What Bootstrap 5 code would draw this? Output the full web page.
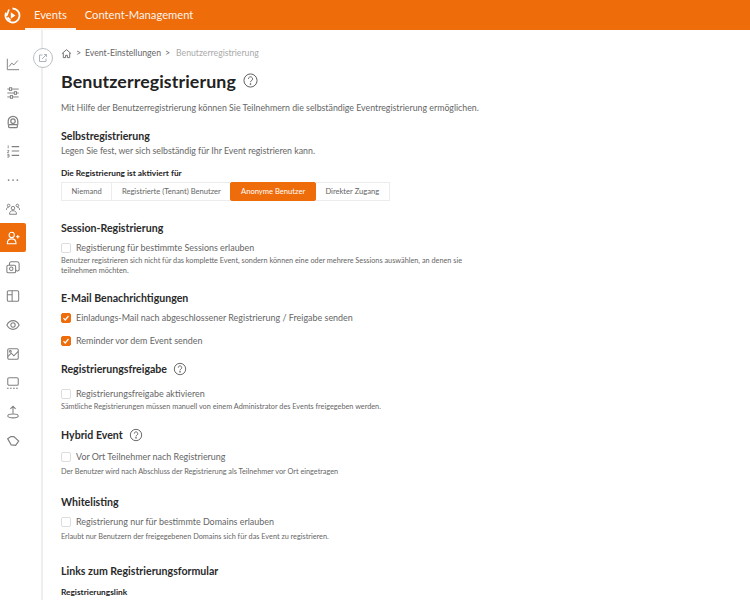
<!DOCTYPE html>
<html lang="de">
<head>
    <meta charset="UTF-8">
    <meta name="viewport" content="width=device-width, initial-scale=1.0">
    <title>Benutzerregistrierung</title>
    <link href="https://cdn.jsdelivr.net/npm/bootstrap@5.3.0/dist/css/bootstrap.min.css" rel="stylesheet">
    <style>
        html, body { height: 600px; overflow: hidden; }
        body { font-family: "Lato", "Liberation Sans", sans-serif; color: #666; background: #fff; font-size: 9px; }
        .top-bar { height: 30px; background: #ee6c0a; }
        .top-logo { width: 25px; }
        .top-link { color: #fff; font-size: 11.2px; line-height: 30px; height: 30px; padding: 0 9px; text-decoration: none; opacity: .92; }
        .top-link.on { border-bottom: 2px solid #fff; }
        .shell { height: 570px; }
        .side-rail { width: 43px; flex: none; border-right: 2px solid #eeeeee; padding-top: 19px; position: relative; }
        .rail-item { width: 26px; height: 29px; display: flex; align-items: center; justify-content: center; color: #808080; }
        .rail-item svg { width: 14px; height: 14px; }
        .rail-item.on { background: #ee6c0a; color: #fff; border-radius: 0 2px 2px 0; }
        .share-btn { position: absolute; left: 33px; top: 18px; width: 20px; height: 20px; border-radius: 50%; background: #fff; border: 1px solid #b9c0c4; display: flex; align-items: center; justify-content: center; color: #a5adb2; }
        .page-main { padding: 17px 0 0 18px; width: 480px; flex: none; }
        .crumbs { height: 12px; font-size: 8.7px; color: #666; gap: 4px; }
        .crumbs .last { color: #aaa; margin-left: 2px; }
        .page-title { font-size: 17.8px; font-weight: 700; color: #222; margin: 10px 0 0; line-height: 24px; letter-spacing: .1px; }
        .help-ic { width: 14px; height: 14px; color: #555; flex: none; }
        .title-help { width: 15px; height: 15px; margin-top: 9px; }
        .head-row { gap: 6px; }
        .title-row { gap: 7px; }
        .intro { margin: 9px 0 0; line-height: 12px; font-size: 8.8px; white-space: nowrap; }
        .sect-h { font-size: 10.6px; font-weight: 700; color: #2a2a2a; line-height: 14px; margin: 0; }
        .plain-line { font-size: 8.8px; line-height: 12px; margin: 2px 0 0; }
        .field-h { font-size: 8.3px; font-weight: 700; color: #222; line-height: 11px; margin: 11px 0 0; }
        .field-h.link-label { margin-top: 9px; }
        .seg-group { margin-top: 3px; height: 19px; }
        .seg-btn { font-size: 7.6px; padding: 0 9.6px; border: 1px solid #ececec; background: #fff; color: #666; border-radius: 0; line-height: 17px; }
        .seg-btn + .seg-btn { margin-left: -1px; }
        .seg-btn.on { background: #ee6c0a; border-color: #ee6c0a; color: #fff; border-radius: 2px; position: relative; }
        .check-row { margin: 7px 0 0; gap: 5px; font-size: 8.95px; line-height: 12px; color: #666; }
        .check-row.wide-top { margin-top: 11px; }
        .check-row.help-top { margin-top: 12px; }
        .check-row.hybrid-top { margin-top: 9px; }
        .check-box { width: 10px; height: 10px; flex: none; border: 1px solid #ddd; border-radius: 2px; display: flex; align-items: center; justify-content: center; background: #fff; }
        .check-box.on { background: #ee6c0a; border-color: #ee6c0a; color: #fff; }
        .fine-print { font-size: 7.3px; line-height: 10px; margin: 2px 0 0; color: #666; max-width: 405px; }
        .fine-print.fine-gap { margin-top: 4px; }
        .sec-15 { margin-top: 15px; }
        .sec-16 { margin-top: 16px; }
        .sec-18 { margin-top: 18px; }
        .sec-20 { margin-top: 20px; }
        .sec-22 { margin-top: 22px; }
    </style>
</head>
<body>
    <div class="top-bar d-flex align-items-stretch">
        <div class="top-logo d-flex align-items-center justify-content-center">
            <svg width="17" height="17" viewBox="0 0 17 17" fill="none" stroke="#fff" stroke-width="1.8">
                <path d="M8.5 1.5a7 7 0 1 1-6.4 4.1"/>
                <path d="M5 2.5 2.5 9M6.5 13.5l-3-3"/>
                <path d="M6.8 5.2l4.6 3.3-4.6 3.3z" fill="#fff" stroke="none"/>
            </svg>
        </div>
        <a class="top-link on" href="#">Events</a>
        <a class="top-link" href="#">Content-Management</a>
    </div>
    <div class="shell d-flex">
        <div class="side-rail">
            <div class="rail-item"><svg viewBox="0 0 16 16" fill="none" stroke="currentColor" stroke-width="1.1"><path d="M1.500 2v12.500H15"/><path d="M3.500 11l3-4 2.500 2 4.500-5"/></svg></div>
            <div class="rail-item"><svg viewBox="0 0 16 16" fill="none" stroke="currentColor" stroke-width="1.1"><path d="M1.500 3.500h13M1.500 8h13M1.500 12.500h13"/><rect x="4" y="2" width="2.500" height="3" fill="#fff"/><rect x="9.500" y="6.500" width="2.500" height="3" fill="#fff"/><rect x="5" y="11" width="2.500" height="3" fill="#fff"/></svg></div>
            <div class="rail-item"><svg viewBox="0 0 16 16" fill="none" stroke="currentColor" stroke-width="1.400"><path d="M2.500 11V7a5.500 5.500 0 0 1 11 0v4"/><circle cx="8" cy="7" r="2.500"/><rect x="3" y="11" width="10" height="3.500" rx="1"/></svg></div>
            <div class="rail-item"><svg viewBox="0 0 16 16" fill="none" stroke="currentColor" stroke-width="1.200"><path d="M6.500 3h8.500M6.500 8h8.500M6.500 13h8.500"/><path d="M2.500 1.500V5M1.500 7.500h2l-2 2.500h2M1.500 12h2v3h-2M1.500 13.500h2" stroke-width=".9"/></svg></div>
            <div class="rail-item"><svg viewBox="0 0 16 16" fill="currentColor"><circle cx="3" cy="8" r="1"/><circle cx="8" cy="8" r="1"/><circle cx="13" cy="8" r="1"/></svg></div>
            <div class="rail-item"><svg viewBox="0 0 16 16" fill="none" stroke="currentColor" stroke-width="1.100"><circle cx="8" cy="7" r="2"/><path d="M4 14c0-3 1.500-4 4-4s4 1 4 4z"/><circle cx="3" cy="4" r="1.500"/><circle cx="13" cy="4" r="1.500"/><path d="M.5 9c0-2 1-3 2.500-3M15.500 9c0-2-1-3-2.500-3"/></svg></div>
            <div class="rail-item on"><svg viewBox="0 0 16 16" fill="none" stroke="currentColor" stroke-width="1.200"><circle cx="6.500" cy="4.500" r="3"/><path d="M1.500 14.500c0-4 2-5.500 5-5.500s5 1.500 5 5.500z"/><path d="M11.500 6.500h4M13.500 4.500v4"/></svg></div>
            <div class="rail-item"><svg viewBox="0 0 16 16" fill="none" stroke="currentColor" stroke-width="1.200"><rect x="1" y="6" width="10" height="8.500" rx="1.500"/><circle cx="6" cy="10" r="2"/><path d="M4 6V3.500A2 2 0 0 1 6 2h6a2.500 2.500 0 0 1 3 2.500V10a2 2 0 0 1-4 1"/></svg></div>
            <div class="rail-item"><svg viewBox="0 0 16 16" fill="none" stroke="currentColor" stroke-width="1.200"><rect x="1.500" y="2" width="13" height="12" rx="1.500"/><path d="M7 2v12M1.500 6.500H7"/></svg></div>
            <div class="rail-item"><svg viewBox="0 0 16 16" fill="none" stroke="currentColor" stroke-width="1.200"><path d="M1 8s2.500-5 7-5 7 5 7 5-2.500 5-7 5-7-5-7-5z"/><circle cx="8" cy="8" r="2.500"/></svg></div>
            <div class="rail-item"><svg viewBox="0 0 16 16" fill="none" stroke="currentColor" stroke-width="1.200"><rect x="2" y="2" width="12" height="12" rx="1.500"/><path d="M2 11l4-4 3 3 5-5"/><circle cx="5" cy="5" r="1"/></svg></div>
            <div class="rail-item"><svg viewBox="0 0 16 16" fill="none" stroke="currentColor" stroke-width="1.200"><rect x="2" y="2" width="12" height="8.500" rx="1.500"/><path d="M1 14h14" stroke-dasharray="2 1.500"/></svg></div>
            <div class="rail-item"><svg viewBox="0 0 16 16" fill="none" stroke="currentColor" stroke-width="1.200"><path d="M8 10V2M5 4.500 8 1.500l3 3"/><ellipse cx="8" cy="12.500" rx="6" ry="2.200"/></svg></div>
            <div class="rail-item"><svg viewBox="0 0 16 16" fill="none" stroke="currentColor" stroke-width="1.400"><path d="M2 5.500 5.500 3h3.500l5.500 5-3.500 5L6 12.500z"/></svg></div>
            <div class="share-btn"><svg width="10" height="10" viewBox="0 0 10 10" fill="none" stroke="currentColor" stroke-width=".9"><path d="M4.500 2H1.500v6.500H8V5.500M4 6l4.500-4.500M6 1.500h2.500V4"/></svg></div>
        </div>
        <div class="page-main">
            <div class="crumbs d-flex align-items-center">
                <svg width="11" height="11" viewBox="0 0 12 12" fill="none" stroke="#666" stroke-width="1"><path d="M1 6.200 6 1.800l5 4.400M2.500 5.500v5h2.500V8h2v2.500h2.500v-5"/></svg>
                <span>&gt;</span><span>Event-Einstellungen</span><span>&gt;</span><span class="last">Benutzerregistrierung</span>
            </div>
            <div class="d-flex align-items-center title-row">
                <h1 class="page-title">Benutzerregistrierung</h1>
                <svg class="help-ic title-help" viewBox="0 0 16 16" fill="none" stroke="currentColor" stroke-width="1"><circle cx="8" cy="8" r="7"/><path d="M5.800 6.200a2.200 2.200 0 1 1 3.400 1.900c-.8.500-1.200.9-1.200 1.700"/><circle cx="8" cy="11.800" r=".5"/></svg>
            </div>
            <p class="intro">Mit Hilfe der Benutzerregistrierung können Sie Teilnehmern die selbständige Eventregistrierung ermöglichen.</p>

            <div class="sec-15">
                <h2 class="sect-h">Selbstregistrierung</h2>
                <p class="plain-line">Legen Sie fest, wer sich selbständig für Ihr Event registrieren kann.</p>
                <p class="field-h">Die Registrierung ist aktiviert für</p>
                <div class="seg-group d-flex">
                    <button class="seg-btn">Niemand</button>
                    <button class="seg-btn">Registrierte (Tenant) Benutzer</button>
                    <button class="seg-btn on">Anonyme Benutzer</button>
                    <button class="seg-btn">Direkter Zugang</button>
                </div>
            </div>

            <div class="sec-20">
                <h2 class="sect-h">Session-Registrierung</h2>
                <label class="check-row d-flex align-items-center"><span class="check-box"></span>Registierung für bestimmte Sessions erlauben</label>
                <p class="fine-print">Benutzer registrieren sich nicht für das komplette Event, sondern können eine oder mehrere Sessions auswählen, an denen sie teilnehmen möchten.</p>
            </div>

            <div class="sec-15">
                <h2 class="sect-h">E-Mail Benachrichtigungen</h2>
                <label class="check-row d-flex align-items-center"><span class="check-box on"><svg width="8" height="8" viewBox="0 0 8 8" fill="none" stroke="currentColor" stroke-width="1.200"><path d="M1.500 4.200 3.200 6l3.300-4"/></svg></span>Einladungs-Mail nach abgeschlossener Registrierung / Freigabe senden</label>
                <label class="check-row wide-top d-flex align-items-center"><span class="check-box on"><svg width="8" height="8" viewBox="0 0 8 8" fill="none" stroke="currentColor" stroke-width="1.200"><path d="M1.500 4.200 3.200 6l3.300-4"/></svg></span>Reminder vor dem Event senden</label>
            </div>

            <div class="sec-15">
                <div class="d-flex align-items-center head-row">
                    <h2 class="sect-h">Registrierungsfreigabe</h2>
                    <svg class="help-ic" viewBox="0 0 16 16" fill="none" stroke="currentColor" stroke-width="1"><circle cx="8" cy="8" r="6.500"/><path d="M6 6.400a2 2 0 1 1 3.100 1.700c-.7.500-1.100.8-1.100 1.500"/><circle cx="8" cy="11.300" r=".5"/></svg>
                </div>
                <label class="check-row help-top d-flex align-items-center"><span class="check-box"></span>Registrierungsfreigabe aktivieren</label>
                <p class="fine-print">Sämtliche Registrierungen müssen manuell von einem Administrator des Events freigegeben werden.</p>
            </div>

            <div class="sec-16">
                <div class="d-flex align-items-center head-row">
                    <h2 class="sect-h">Hybrid Event</h2>
                    <svg class="help-ic" viewBox="0 0 16 16" fill="none" stroke="currentColor" stroke-width="1"><circle cx="8" cy="8" r="6.500"/><path d="M6 6.400a2 2 0 1 1 3.100 1.700c-.7.500-1.100.8-1.100 1.500"/><circle cx="8" cy="11.300" r=".5"/></svg>
                </div>
                <label class="check-row hybrid-top d-flex align-items-center"><span class="check-box"></span>Vor Ort Teilnehmer nach Registrierung</label>
                <p class="fine-print fine-gap">Der Benutzer wird nach Abschluss der Registrierung als Teilnehmer vor Ort eingetragen</p>
            </div>

            <div class="sec-18">
                <h2 class="sect-h">Whitelisting</h2>
                <label class="check-row d-flex align-items-center"><span class="check-box"></span>Registrierung nur für bestimmte Domains erlauben</label>
                <p class="fine-print fine-gap">Erlaubt nur Benutzern der freigegebenen Domains sich für das Event zu registrieren.</p>
            </div>

            <div class="sec-22">
                <h2 class="sect-h">Links zum Registrierungsformular</h2>
                <p class="field-h link-label">Registrierungslink</p>
            </div>
        </div>
    </div>
</body>
</html>
